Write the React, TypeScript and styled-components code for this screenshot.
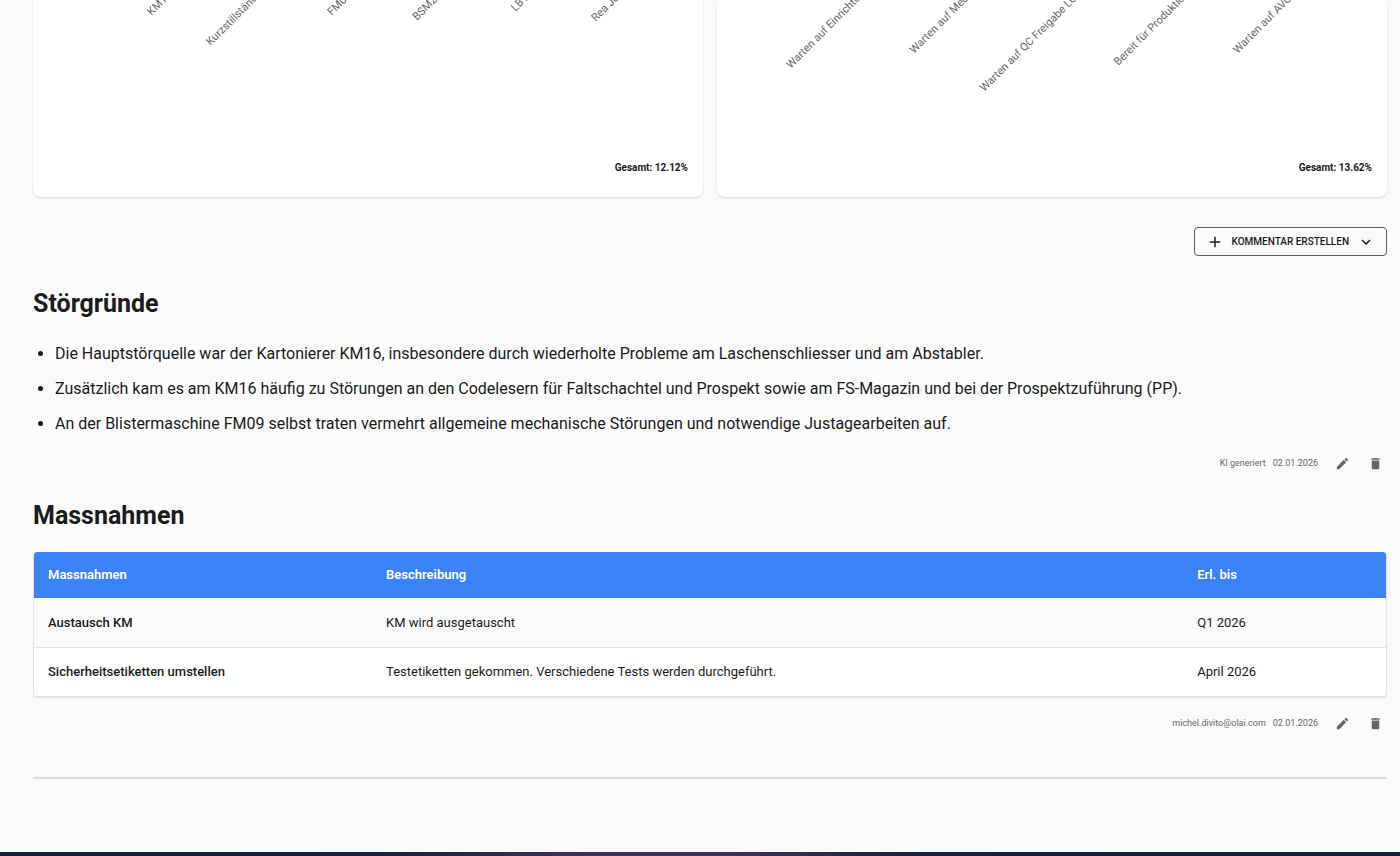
import React from "react";
import styled, { createGlobalStyle } from "styled-components";
import { MdAdd, MdDelete, MdEdit, MdKeyboardArrowDown } from "react-icons/md";

const GlobalStyle = createGlobalStyle`
  *, *::before, *::after {
    box-sizing: border-box;
  }
  body {
    margin: 0;
    background: #fafafa;
    color: #1b1b1b;
    font-family: Roboto, "Liberation Sans", sans-serif;
    -webkit-font-smoothing: antialiased;
  }
`;

const Page = styled.div`
  display: flex;
  flex-direction: column;
  min-height: 100vh;
`;

const Main = styled.main`
  display: flex;
  flex-direction: column;
  flex: 1;
  padding: 0 13px 0 33px;
`;

const ChartGrid = styled.div`
  display: grid;
  grid-template-columns: 1fr 1fr;
  gap: 14px;
`;

const ChartCard = styled.section`
  display: flex;
  flex-direction: column;
  padding-bottom: 21px;
  background: #fff;
  border-radius: 0 0 8px 8px;
  box-shadow: 0 1px 2px rgba(0, 0, 0, 0.14);
`;

const AxisLabels = styled.svg`
  display: block;
  width: 100%;
  height: 160px;
  font-size: 11px;
  fill: #666;
`;

const Total = styled.p`
  margin: 0;
  padding: 0 15px;
  font-size: 10px;
  line-height: 16px;
  font-weight: 700;
  text-align: right;
`;

const Toolbar = styled.div`
  display: flex;
  justify-content: flex-end;
  margin: 30px 0 8px;
`;

const CreateButton = styled.button`
  display: flex;
  align-items: center;
  gap: 8px;
  height: 29px;
  padding: 0 11px;
  border: 1px solid #5c5c5c;
  border-radius: 4px;
  background: transparent;
  color: #1b1b1b;
  font: 500 10px/16px Roboto, "Liberation Sans", sans-serif;
  text-transform: uppercase;
`;

const Section = styled.section`
  display: flex;
  flex-direction: column;
`;

const Heading = styled.h2`
  margin: 24px 0 20px;
  font-size: 25px;
  line-height: 32px;
  font-weight: 700;
`;

const ReasonList = styled.ul`
  display: flex;
  flex-direction: column;
  gap: 8px;
  margin: 0 0 13px;
  padding: 0 0 0 22px;
  font-size: 16px;
  line-height: 27px;
`;

const Meta = styled.div`
  display: flex;
  justify-content: flex-end;
  align-items: center;
  gap: 7px;
  height: 26px;
  color: #666;
  font-size: 9px;
  line-height: 12px;
`;

const Actions = styled.div`
  display: flex;
  gap: 9px;
  margin-left: 5px;
`;

const IconButton = styled.button`
  display: flex;
  align-items: center;
  justify-content: center;
  width: 24px;
  height: 24px;
  padding: 0;
  border: 0;
  background: transparent;
  color: #666;
`;

const TableFrame = styled.div`
  overflow: hidden;
  margin-bottom: 13px;
  border: 1px solid #e2e2e2;
  border-top: 0;
  border-radius: 4px;
  background: #fff;
  box-shadow: 0 1px 1px rgba(0, 0, 0, 0.08);
`;

const Table = styled.table`
  width: 100%;
  table-layout: fixed;
  border-collapse: collapse;
  font-size: 13px;
  line-height: 20px;
  text-align: left;
`;

const HeadCell = styled.th<{ $width: string }>`
  width: ${(p) => p.$width};
  height: 46px;
  padding: 0 14px;
  background: #3b82f6;
  color: #fff;
  font-weight: 600;
`;

const BodyRow = styled.tr`
  & > * {
    height: 49px;
    padding: 1px 14px 0;
    font-weight: 400;
  }
  & > th {
    font-weight: 500;
  }
  &:nth-child(odd) {
    background: #fafafa;
  }
  & + & > * {
    border-top: 1px solid #e2e2e2;
  }
`;

const Divider = styled.hr`
  width: 100%;
  height: 2px;
  margin: 41px 0 0;
  border: 0;
  background: #dcdcdc;
`;

const Footer = styled.footer`
  height: 4px;
  background: linear-gradient(90deg, #14203c 0%, #14223c 27%, #41305d 42%, #41305d 52%, #14223c 66%, #14203c 100%);
`;

interface AxisLabel {
  text: string;
  x: string;
  y: number;
}

const machineLabels: AxisLabel[] = [
  { text: "KM16", x: "17.7%", y: 16 },
  { text: "Kurzstillstände", x: "26.5%", y: 46 },
  { text: "FM09", x: "44.6%", y: 16 },
  { text: "BSM2", x: "57.3%", y: 21 },
  { text: "LB1", x: "72%", y: 12 },
  { text: "Rea Jet", x: "84%", y: 22 },
];

const waitingLabels: AxisLabel[] = [
  { text: "Warten auf Einrichter", x: "11%", y: 69 },
  { text: "Warten auf Mechanik", x: "29.4%", y: 54 },
  { text: "Warten auf QC Freigabe LC", x: "39.9%", y: 92 },
  { text: "Bereit für Produktion", x: "59.9%", y: 66 },
  { text: "Warten auf AVOR", x: "77.7%", y: 54 },
];

const reasons = [
  "Die Hauptstörquelle war der Kartonierer KM16, insbesondere durch wiederholte Probleme am Laschenschliesser und am Abstabler.",
  "Zusätzlich kam es am KM16 häufig zu Störungen an den Codelesern für Faltschachtel und Prospekt sowie am FS-Magazin und bei der Prospektzuführung (PP).",
  "An der Blistermaschine FM09 selbst traten vermehrt allgemeine mechanische Störungen und notwendige Justagearbeiten auf.",
];

const measures = [
  { name: "Austausch KM", description: "KM wird ausgetauscht", due: "Q1 2026" },
  {
    name: "Sicherheitsetiketten umstellen",
    description: "Testetiketten gekommen. Verschiedene Tests werden durchgeführt.",
    due: "April 2026",
  },
];

function Chart({ labels, total }: { labels: AxisLabel[]; total: string }) {
  return (
    <ChartCard>
      <AxisLabels>
        {labels.map((label) => (
          <svg key={label.text} x={label.x} y={label.y} overflow="visible">
            <text transform="rotate(-45)">{label.text}</text>
          </svg>
        ))}
      </AxisLabels>
      <Total>Gesamt: {total}</Total>
    </ChartCard>
  );
}

function CommentMeta({ author, date }: { author: string; date: string }) {
  return (
    <Meta>
      <span>{author}</span>
      <time>{date}</time>
      <Actions>
        <IconButton type="button" aria-label="Bearbeiten">
          <MdEdit size={15} />
        </IconButton>
        <IconButton type="button" aria-label="Löschen">
          <MdDelete size={15} />
        </IconButton>
      </Actions>
    </Meta>
  );
}

export default function App() {
  return (
    <Page>
      <GlobalStyle />
      <Main>
        <ChartGrid>
          <Chart labels={machineLabels} total="12.12%" />
          <Chart labels={waitingLabels} total="13.62%" />
        </ChartGrid>
        <Toolbar>
          <CreateButton type="button">
            <MdAdd size={18} />
            Kommentar erstellen
            <MdKeyboardArrowDown size={18} />
          </CreateButton>
        </Toolbar>
        <Section>
          <Heading>Störgründe</Heading>
          <ReasonList>
            {reasons.map((reason) => (
              <li key={reason}>{reason}</li>
            ))}
          </ReasonList>
          <CommentMeta author="KI generiert" date="02.01.2026" />
        </Section>
        <Section>
          <Heading>Massnahmen</Heading>
          <TableFrame>
            <Table>
              <thead>
                <tr>
                  <HeadCell scope="col" $width="25%">Massnahmen</HeadCell>
                  <HeadCell scope="col" $width="60%">Beschreibung</HeadCell>
                  <HeadCell scope="col" $width="15%">Erl. bis</HeadCell>
                </tr>
              </thead>
              <tbody>
                {measures.map((measure) => (
                  <BodyRow key={measure.name}>
                    <th scope="row">{measure.name}</th>
                    <td>{measure.description}</td>
                    <td>{measure.due}</td>
                  </BodyRow>
                ))}
              </tbody>
            </Table>
          </TableFrame>
          <CommentMeta author="michel.divito@olai.com" date="02.01.2026" />
        </Section>
        <Divider />
      </Main>
      <Footer />
    </Page>
  );
}
